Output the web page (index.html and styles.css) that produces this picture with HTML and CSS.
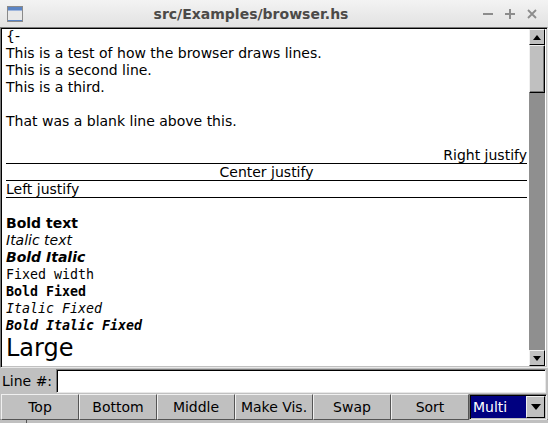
FILE: index.html
```html
<!DOCTYPE html>
<html>
<head>
<meta charset="utf-8">
<link rel="stylesheet" href="styles.css">
</head>
<body>
<div class="titlebar">
  <svg class="appicon" viewBox="0 0 16 16">
    <rect x="0.5" y="0.5" width="15" height="15" fill="#e9e9e9" stroke="#8a8a8a"/>
    <rect x="1" y="1" width="14" height="3" fill="#5b84c4"/>
    <rect x="1" y="4" width="14" height="1" fill="#9fb6dc"/>
    <rect x="1" y="14" width="14" height="1" fill="#5b84c4"/>
  </svg>
  <div class="title">src/Examples/browser.hs</div>
  <div class="controls">
    <svg viewBox="0 0 10 10"><path d="M0 5H10" stroke="#8c8c8c" stroke-width="2"/></svg>
    <svg viewBox="0 0 10 10"><path d="M0 5H10M5 0V10" stroke="#8c8c8c" stroke-width="2"/></svg>
    <svg viewBox="0 0 10 10"><path d="M1 1L9 9M9 1L1 9" stroke="#8c8c8c" stroke-width="1.8"/></svg>
  </div>
</div>
<div class="browser">
  <div class="lines">
    <div class="row">{-</div>
    <div class="row">This is a test of how the browser draws lines.</div>
    <div class="row">This is a second line.</div>
    <div class="row">This is a third.</div>
    <div class="row"></div>
    <div class="row">That was a blank line above this.</div>
    <div class="row"></div>
    <div class="row rule right">Right justify</div>
    <div class="row rule center">Center justify</div>
    <div class="row rule">Left justify</div>
    <div class="row"></div>
    <div class="row b">Bold text</div>
    <div class="row i">Italic text</div>
    <div class="row b i">Bold Italic</div>
    <div class="row mono">Fixed width</div>
    <div class="row mono b">Bold Fixed</div>
    <div class="row mono i">Italic Fixed</div>
    <div class="row mono b i">Bold Italic Fixed</div>
    <div class="row large">Large</div>
  </div>
  <div class="scrollbar">
    <div class="sb-btn"><svg viewBox="0 0 8 5"><path d="M0 5L4 0L8 5Z" fill="#000"/></svg></div>
    <div class="sb-thumb"></div>
    <div class="sb-trough"></div>
    <div class="sb-btn"><svg viewBox="0 0 8 5"><path d="M0 0L8 0L4 5Z" fill="#000"/></svg></div>
  </div>
</div>
<div class="inputrow">
  <div class="label">Line #:</div>
  <div class="input"></div>
</div>
<div class="buttons">
  <div class="btn">Top</div>
  <div class="btn">Bottom</div>
  <div class="btn">Middle</div>
  <div class="btn">Make Vis.</div>
  <div class="btn">Swap</div>
  <div class="btn">Sort</div>
  <div class="choice">
    <div class="choice-value">Multi</div>
    <div class="choice-arrow"><svg viewBox="0 0 10 6"><path d="M0 0L10 0L5 6Z" fill="#000"/></svg></div>
  </div>
</div>
<div class="footer"><div class="footer-cell"></div><div class="footer-cell"></div></div>
</body>
</html>
```
FILE: styles.css
```css
html, body {
  margin: 0;
  padding: 0;
}
body {
  width: 548px;
  height: 423px;
  overflow: hidden;
  background: #c0c0c0;
  font-family: "DejaVu Sans", sans-serif;
  font-size: 14px;
  color: #000;
}
.titlebar {
  height: 27px;
  display: flex;
  align-items: center;
  background: linear-gradient(#f3f3f3, #e2e2e2);
}
.appicon {
  width: 16px;
  height: 16px;
  margin-left: 7px;
  flex: none;
}
.title {
  flex: 1;
  text-align: center;
  font-weight: bold;
  font-size: 14px;
  color: #4c4a48;
}
.controls {
  display: flex;
  gap: 12px;
  padding: 0 11px 0 4px;
}
.controls svg {
  width: 10px;
  height: 10px;
  display: block;
}
.browser {
  height: 341px;
  box-sizing: border-box;
  display: flex;
  background: #fff;
  border: 1px solid;
  border-color: #7a7a7a #e8e8e8 #e8e8e8 #7a7a7a;
  box-shadow: inset 1px 1px 0 #000, inset -1px -1px 0 #c0c0c0;
  padding: 1px;
}
.lines {
  flex: 1;
  min-width: 0;
  margin-top: -1.5px;
  padding: 0 2px 0 4px;
  overflow: hidden;
}
.row {
  height: 17px;
  line-height: 17px;
  white-space: pre;
  box-sizing: border-box;
}
.rule {
  border-bottom: 1px solid #000;
}
.right { text-align: right; }
.center { text-align: center; }
.b { font-weight: bold; }
.i { font-style: italic; }
.mono {
  font-family: "DejaVu Sans Mono", monospace;
  font-size: 13.3px;
}
.large {
  font-size: 24px;
  height: 28px;
  line-height: 28px;
}
.scrollbar {
  width: 16px;
  flex: none;
  display: flex;
  flex-direction: column;
  background: #8f8f8f;
  margin-right: 1px;
}
.sb-btn {
  height: 16px;
  flex: none;
  box-sizing: border-box;
  background: #c0c0c0;
  border: 1px solid;
  border-color: #f0f0f0 #000 #000 #f0f0f0;
  display: flex;
  align-items: center;
  justify-content: center;
}
.sb-btn svg {
  width: 8px;
  height: 5px;
  display: block;
}
.sb-thumb {
  height: 48px;
  flex: none;
  box-sizing: border-box;
  background: #c0c0c0;
  border: 1px solid;
  border-color: #f0f0f0 #000 #000 #f0f0f0;
  box-shadow: inset -1px -1px 0 #7a7a7a;
}
.sb-trough {
  flex: 1;
}
.inputrow {
  display: flex;
  height: 24px;
  margin-top: 1px;
}
.label {
  width: 54px;
  padding-left: 2px;
  line-height: 24px;
}
.input {
  flex: 1;
  height: 24px;
  box-sizing: border-box;
  margin-right: 2px;
  background: #fff;
  border: 1px solid;
  border-color: #7a7a7a #e8e8e8 #e8e8e8 #7a7a7a;
  box-shadow: inset 1px 1px 0 #000;
}
.buttons {
  display: grid;
  grid-template-columns: repeat(7, 1fr);
  height: 26px;
  padding: 1px 1px 0 1px;
  box-sizing: border-box;
}
.btn {
  box-sizing: border-box;
  border: 1px solid;
  border-color: #f0f0f0 #555 #555 #f0f0f0;
  display: flex;
  align-items: center;
  justify-content: center;
  background: #c0c0c0;
}
.choice {
  display: flex;
  box-sizing: border-box;
  border: 1px solid;
  border-color: #7a7a7a #e8e8e8 #e8e8e8 #7a7a7a;
  box-shadow: inset 1px 1px 0 #000;
  padding: 1px;
}
.choice-value {
  flex: 1;
  background: #000080;
  color: #fff;
  padding-left: 2px;
  line-height: 22px;
}
.choice-arrow {
  width: 19px;
  box-sizing: border-box;
  border: 1px solid;
  border-color: #f0f0f0 #000 #000 #f0f0f0;
  display: flex;
  align-items: center;
  justify-content: center;
}
.choice-arrow svg {
  width: 10px;
  height: 6px;
  display: block;
}
.footer {
  display: flex;
  height: 4px;
  border-top: 1px solid #8a8a8a;
}
.footer-cell {
  width: 26px;
  border-right: 1px solid #555;
}
.footer-cell + .footer-cell {
  flex: 1;
  border-right: none;
}
```
